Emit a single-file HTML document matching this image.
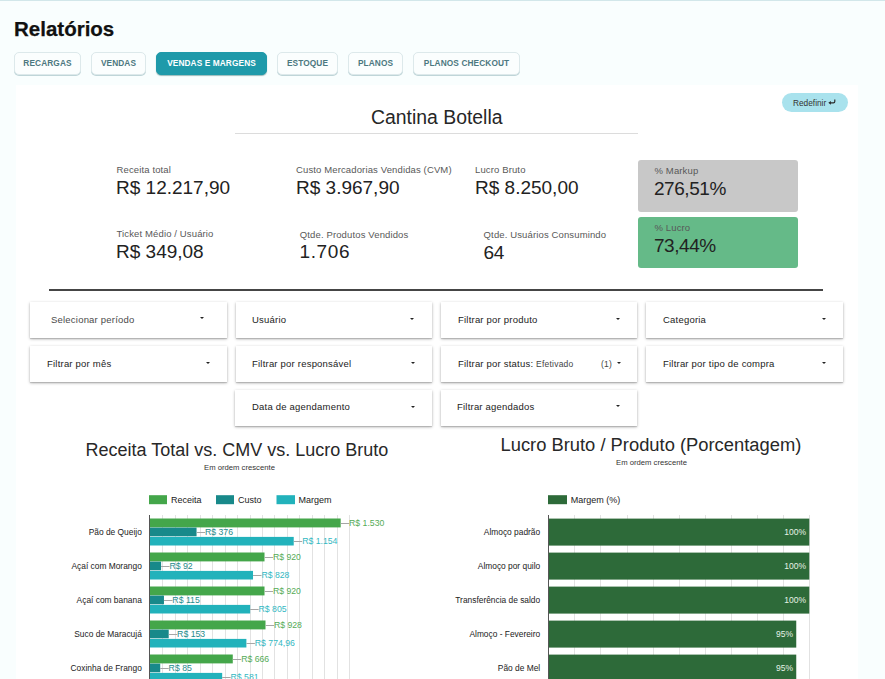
<!DOCTYPE html>
<html><head><meta charset="utf-8">
<style>
*{box-sizing:border-box;margin:0;padding:0}
html,body{width:885px;height:679px;overflow:hidden}
body{background:#f9fefe;font-family:"Liberation Sans",sans-serif;position:relative;color:#222}
.a{position:absolute;white-space:nowrap}
#topline{position:absolute;left:0;top:0;width:885px;height:1px;background:#d2e7ea}
h1{position:absolute;left:14px;top:19px;font-size:20.5px;line-height:20.5px;font-weight:700;color:#111;-webkit-text-stroke:0.25px #111}
.tab{position:absolute;top:52px;height:22.6px;border:1px solid #dde9eb;border-radius:5px;background:#fbfefe;box-shadow:0 1px 0 #bfd5d8;font-size:8.3px;font-weight:700;color:#4c7880;text-align:center;line-height:21px;letter-spacing:0.1px}
.tab.on{background:#1f9aaa;border-color:#1f9aaa;color:#fff;box-shadow:0 1px 1px #9bb}
#card{position:absolute;left:15.7px;top:85px;width:842.1px;height:600px;background:#fff}
.redef{position:absolute;left:782px;top:93px;width:66px;height:19px;border-radius:10px;background:#a9e2ed;font-size:8px;line-height:19px;color:#333;text-align:center}
.title{font-size:19.4px;line-height:20px;color:#262626}
.hr1{position:absolute;left:235px;top:133px;width:403px;height:1px;background:#dcdcdc}
.lbl{font-size:9.5px;line-height:10px;color:#585858;letter-spacing:0.13px}
.val{font-size:19px;line-height:19px;color:#222}
.box{position:absolute;border-radius:3px}
.hr2{position:absolute;left:49px;top:289px;width:774px;height:2px;background:#454545}
.dd{position:absolute;height:35.6px;background:#fff;box-shadow:0 1px 3px rgba(0,0,0,0.28),0 1px 1px rgba(0,0,0,0.14)}
.dd span{position:absolute;font-size:9.5px;line-height:10px;color:#222;white-space:nowrap;letter-spacing:0.21px}
.arr{position:absolute;width:0;height:0;border-left:2.6px solid transparent;border-right:2.6px solid transparent;border-top:2.9px solid #222;margin-top:-0.8px;margin-left:0}
.ctitle{font-size:18px;line-height:18px;color:#282828}
.csub{font-size:7.7px;line-height:8px;color:#333}
.leg{font-size:9.2px;line-height:9px;color:#222}
.yl{font-size:8.6px;line-height:9px;color:#222;text-align:right}
.dl{font-size:9px;line-height:9px}
</style></head>
<body>
<div id="topline"></div>
<h1>Relatórios</h1>
<div class="tab" style="left:14px;width:67px">RECARGAS</div>
<div class="tab" style="left:91px;width:55px">VENDAS</div>
<div class="tab on" style="left:156px;width:111px">VENDAS E MARGENS</div>
<div class="tab" style="left:277px;width:61px">ESTOQUE</div>
<div class="tab" style="left:348px;width:55px">PLANOS</div>
<div class="tab" style="left:413px;width:107px">PLANOS CHECKOUT</div>

<div id="card"></div>
<div class="redef"><span style="position:absolute;left:11px;top:6px;font-size:8.3px;line-height:9px">Redefinir</span><svg style="position:absolute;left:46px;top:5.5px" width="8" height="7" viewBox="0 0 8 7"><path d="M6.8 0.6V2.4Q6.8 3.8 5.4 3.8H1.8" fill="none" stroke="#2a2a2a" stroke-width="1.15"/><path d="M0.3 3.8L2.9 1.9V5.7Z" fill="#2a2a2a"/></svg></div>
<div class="a title" style="left:371px;top:107px">Cantina Botella</div>
<div class="hr1"></div>

<div class="a lbl" style="left:116.5px;top:165px">Receita total</div>
<div class="a val" style="left:116px;top:178px">R$ 12.217,90</div>
<div class="a lbl" style="left:296px;top:165px">Custo Mercadorias Vendidas (CVM)</div>
<div class="a val" style="left:296px;top:178px">R$ 3.967,90</div>
<div class="a lbl" style="left:475px;top:165px">Lucro Bruto</div>
<div class="a val" style="left:475px;top:178px">R$ 8.250,00</div>

<div class="box" style="left:638px;top:160px;width:160px;height:52px;background:#c8c8c8"></div>
<div class="a lbl" style="left:654.5px;top:165.7px">% Markup</div>
<div class="a val" style="left:654px;top:179px;letter-spacing:-0.45px">276,51%</div>
<div class="box" style="left:638px;top:216.5px;width:160px;height:51.5px;background:#65ba88"></div>
<div class="a lbl" style="left:654.5px;top:223.4px">% Lucro</div>
<div class="a val" style="left:654px;top:236px;letter-spacing:-0.45px">73,44%</div>

<div class="a lbl" style="left:116.5px;top:229.3px">Ticket Médio / Usuário</div>
<div class="a val" style="left:116px;top:242px">R$ 349,08</div>
<div class="a lbl" style="left:299.8px;top:229.5px">Qtde. Produtos Vendidos</div>
<div class="a val" style="left:299.5px;top:242px;letter-spacing:0.6px">1.706</div>
<div class="a lbl" style="left:483.6px;top:229.9px">Qtde. Usuários Consumindo</div>
<div class="a val" style="left:483.5px;top:242.5px;letter-spacing:-0.4px">64</div>

<div class="hr2"></div>

<!-- dropdowns -->
<div class="dd" style="left:30px;top:302px;width:197px"><span style="left:21px;top:13.4px;color:#4a4a4a">Selecionar período</span><i class="arr" style="left:169.5px;top:16px"></i></div>
<div class="dd" style="left:236px;top:302px;width:196px"><span style="left:16px;top:13.4px">Usuário</span><i class="arr" style="left:174px;top:16.5px"></i></div>
<div class="dd" style="left:441px;top:302px;width:196px"><span style="left:17px;top:13.4px">Filtrar por produto</span><i class="arr" style="left:175px;top:16.5px"></i></div>
<div class="dd" style="left:646px;top:302px;width:197px"><span style="left:17px;top:13.4px">Categoria</span><i class="arr" style="left:176px;top:16.5px"></i></div>

<div class="dd" style="left:30px;top:346px;width:197px"><span style="left:17px;top:12.5px">Filtrar por mês</span><i class="arr" style="left:176px;top:17px"></i></div>
<div class="dd" style="left:236px;top:346px;width:196px"><span style="left:16px;top:12.5px">Filtrar por responsável</span><i class="arr" style="left:175px;top:17px"></i></div>
<div class="dd" style="left:441px;top:346px;width:196px"><span style="left:17px;top:12.5px">Filtrar por status: <span style="position:static;font-size:8.5px;color:#444">Efetivado</span></span><span style="left:160px;top:12.5px;font-size:8.5px;color:#444">(1)</span><i class="arr" style="left:176px;top:17px"></i></div>
<div class="dd" style="left:646px;top:346px;width:197px"><span style="left:17px;top:12.5px">Filtrar por tipo de compra</span><i class="arr" style="left:176px;top:17px"></i></div>

<div class="dd" style="left:235px;top:390px;width:197px"><span style="left:17px;top:12.2px">Data de agendamento</span><i class="arr" style="left:176.3px;top:16.3px"></i></div>
<div class="dd" style="left:441px;top:390px;width:196px"><span style="left:16px;top:12.2px">Filtrar agendados</span><i class="arr" style="left:175px;top:16px"></i></div>

<!-- left chart -->
<div class="a ctitle" style="left:85.5px;top:441.1px">Receita Total vs. CMV vs. Lucro Bruto</div>
<div class="a csub" style="left:204px;top:463.7px">Em ordem crescente</div>
<!-- right chart -->
<div class="a ctitle" style="left:500.5px;top:435.8px;font-size:18.35px">Lucro Bruto / Produto (Porcentagem)</div>
<div class="a csub" style="left:616px;top:458.6px">Em ordem crescente</div>

<svg class="a" style="left:0;top:480px" width="885" height="199" viewBox="0 480 885 199" font-family="Liberation Sans, sans-serif">
<rect x="162.00" y="515.00" width="1.00" height="164.00" fill="#e2e2e2"/>
<rect x="175.00" y="515.00" width="1.00" height="164.00" fill="#e2e2e2"/>
<rect x="187.00" y="515.00" width="1.00" height="164.00" fill="#e2e2e2"/>
<rect x="200.00" y="515.00" width="1.00" height="164.00" fill="#e2e2e2"/>
<rect x="212.00" y="515.00" width="1.00" height="164.00" fill="#e2e2e2"/>
<rect x="225.00" y="515.00" width="1.00" height="164.00" fill="#e2e2e2"/>
<rect x="237.00" y="515.00" width="1.00" height="164.00" fill="#e2e2e2"/>
<rect x="250.00" y="515.00" width="1.00" height="164.00" fill="#e2e2e2"/>
<rect x="262.00" y="515.00" width="1.00" height="164.00" fill="#e2e2e2"/>
<rect x="274.00" y="515.00" width="1.00" height="164.00" fill="#e2e2e2"/>
<rect x="287.00" y="515.00" width="1.00" height="164.00" fill="#e2e2e2"/>
<rect x="299.00" y="515.00" width="1.00" height="164.00" fill="#e2e2e2"/>
<rect x="312.00" y="515.00" width="1.00" height="164.00" fill="#e2e2e2"/>
<rect x="324.00" y="515.00" width="1.00" height="164.00" fill="#e2e2e2"/>
<rect x="337.00" y="515.00" width="1.00" height="164.00" fill="#e2e2e2"/>
<rect x="349.00" y="515.00" width="1.00" height="164.00" fill="#e2e2e2"/>
<rect x="149.00" y="495.20" width="18.00" height="9.00" fill="#44a64a"/>
<text x="171" y="503" fill="#222" font-size="9" text-anchor="start" >Receita</text>
<rect x="216.00" y="495.20" width="18.00" height="9.00" fill="#18898a"/>
<text x="238" y="503" fill="#222" font-size="9" text-anchor="start" >Custo</text>
<rect x="276.50" y="495.20" width="18.50" height="9.00" fill="#22b2bb"/>
<text x="298.5" y="503" fill="#222" font-size="9" text-anchor="start" >Margem</text>
<rect x="149.60" y="518.50" width="191.10" height="8.90" fill="#44a64a"/>
<rect x="340.70" y="523.00" width="8.50" height="1.00" fill="#a6a6a6"/>
<text x="349.097" y="526.0500000000001" fill="#55ab57" font-size="8.7" text-anchor="start" >R$ 1.530</text>
<rect x="149.60" y="527.60" width="46.96" height="8.70" fill="#18898a"/>
<rect x="196.56" y="532.00" width="8.50" height="1.00" fill="#a6a6a6"/>
<text x="204.9624" y="535.0500000000001" fill="#1f8b8b" font-size="8.7" text-anchor="start" >R$ 376</text>
<rect x="149.60" y="536.90" width="144.13" height="8.60" fill="#22b2bb"/>
<rect x="293.73" y="541.00" width="8.50" height="1.00" fill="#a6a6a6"/>
<text x="302.1346" y="544.3" fill="#33b8c2" font-size="8.7" text-anchor="start" >R$ 1.154</text>
<text x="141.8" y="535.0" fill="#222" font-size="8.4" text-anchor="end" >Pão de Queijo</text>
<rect x="149.60" y="552.50" width="114.91" height="8.90" fill="#44a64a"/>
<rect x="264.51" y="557.00" width="8.50" height="1.00" fill="#a6a6a6"/>
<text x="272.90799999999996" y="560.0500000000001" fill="#55ab57" font-size="8.7" text-anchor="start" >R$ 920</text>
<rect x="149.60" y="561.60" width="11.49" height="8.70" fill="#18898a"/>
<rect x="161.09" y="566.00" width="8.50" height="1.00" fill="#a6a6a6"/>
<text x="169.4908" y="569.0500000000001" fill="#1f8b8b" font-size="8.7" text-anchor="start" >R$ 92</text>
<rect x="149.60" y="570.90" width="103.42" height="8.60" fill="#22b2bb"/>
<rect x="253.02" y="575.00" width="8.50" height="1.00" fill="#a6a6a6"/>
<text x="261.4172" y="578.3" fill="#33b8c2" font-size="8.7" text-anchor="start" >R$ 828</text>
<text x="141.8" y="569.0" fill="#222" font-size="8.4" text-anchor="end" >Açaí com Morango</text>
<rect x="149.60" y="586.50" width="114.91" height="8.90" fill="#44a64a"/>
<rect x="264.51" y="591.00" width="8.50" height="1.00" fill="#a6a6a6"/>
<text x="272.90799999999996" y="594.0500000000001" fill="#55ab57" font-size="8.7" text-anchor="start" >R$ 920</text>
<rect x="149.60" y="595.60" width="14.36" height="8.70" fill="#18898a"/>
<rect x="163.96" y="600.00" width="8.50" height="1.00" fill="#a6a6a6"/>
<text x="172.3635" y="603.0500000000001" fill="#1f8b8b" font-size="8.7" text-anchor="start" >R$ 115</text>
<rect x="149.60" y="604.90" width="100.54" height="8.60" fill="#22b2bb"/>
<rect x="250.14" y="609.00" width="8.50" height="1.00" fill="#a6a6a6"/>
<text x="258.54449999999997" y="612.3" fill="#33b8c2" font-size="8.7" text-anchor="start" >R$ 805</text>
<text x="141.8" y="603.0" fill="#222" font-size="8.4" text-anchor="end" >Açaí com banana</text>
<rect x="149.60" y="620.50" width="115.91" height="8.90" fill="#44a64a"/>
<rect x="265.51" y="625.00" width="8.50" height="1.00" fill="#a6a6a6"/>
<text x="273.9072" y="628.0500000000001" fill="#55ab57" font-size="8.7" text-anchor="start" >R$ 928</text>
<rect x="149.60" y="629.60" width="19.11" height="8.70" fill="#18898a"/>
<rect x="168.71" y="634.00" width="8.50" height="1.00" fill="#a6a6a6"/>
<text x="177.1097" y="637.0500000000001" fill="#1f8b8b" font-size="8.7" text-anchor="start" >R$ 153</text>
<rect x="149.60" y="638.90" width="96.79" height="8.60" fill="#22b2bb"/>
<rect x="246.39" y="643.00" width="8.50" height="1.00" fill="#a6a6a6"/>
<text x="254.792504" y="646.3" fill="#33b8c2" font-size="8.7" text-anchor="start" >R$ 774,96</text>
<text x="141.8" y="637.0" fill="#222" font-size="8.4" text-anchor="end" >Suco de Maracujá</text>
<rect x="149.60" y="654.50" width="83.18" height="8.90" fill="#44a64a"/>
<rect x="232.78" y="659.00" width="8.50" height="1.00" fill="#a6a6a6"/>
<text x="241.18339999999998" y="662.0500000000001" fill="#55ab57" font-size="8.7" text-anchor="start" >R$ 666</text>
<rect x="149.60" y="663.60" width="10.62" height="8.70" fill="#18898a"/>
<rect x="160.22" y="668.00" width="8.50" height="1.00" fill="#a6a6a6"/>
<text x="168.6165" y="671.0500000000001" fill="#1f8b8b" font-size="8.7" text-anchor="start" >R$ 85</text>
<rect x="149.60" y="672.90" width="72.57" height="8.60" fill="#22b2bb"/>
<rect x="222.17" y="677.00" width="8.50" height="1.00" fill="#a6a6a6"/>
<text x="230.5669" y="680.3" fill="#33b8c2" font-size="8.7" text-anchor="start" >R$ 581</text>
<text x="141.8" y="671.0" fill="#222" font-size="8.4" text-anchor="end" >Coxinha de Frango</text>
<rect x="149.00" y="515.00" width="1.00" height="164.00" fill="#555555"/>
<rect x="574.00" y="515.00" width="1.00" height="164.00" fill="#e2e2e2"/>
<rect x="600.00" y="515.00" width="1.00" height="164.00" fill="#e2e2e2"/>
<rect x="627.00" y="515.00" width="1.00" height="164.00" fill="#e2e2e2"/>
<rect x="653.00" y="515.00" width="1.00" height="164.00" fill="#e2e2e2"/>
<rect x="679.00" y="515.00" width="1.00" height="164.00" fill="#e2e2e2"/>
<rect x="705.00" y="515.00" width="1.00" height="164.00" fill="#e2e2e2"/>
<rect x="731.00" y="515.00" width="1.00" height="164.00" fill="#e2e2e2"/>
<rect x="757.00" y="515.00" width="1.00" height="164.00" fill="#e2e2e2"/>
<rect x="783.00" y="515.00" width="1.00" height="164.00" fill="#e2e2e2"/>
<rect x="809.00" y="515.00" width="1.00" height="164.00" fill="#e2e2e2"/>
<rect x="548.00" y="495.20" width="19.00" height="9.00" fill="#2d6a39"/>
<text x="570.7" y="503" fill="#222" font-size="9" text-anchor="start" >Margem (%)</text>
<rect x="548.30" y="518.60" width="261.00" height="27.00" fill="#2d6a39"/>
<text x="806.0" y="535.1" fill="#e6f2e6" font-size="8.5" text-anchor="end" >100%</text>
<text x="540.2" y="535.1" fill="#222" font-size="8.4" text-anchor="end" >Almoço padrão</text>
<rect x="548.30" y="552.60" width="261.00" height="27.00" fill="#2d6a39"/>
<text x="806.0" y="569.1" fill="#e6f2e6" font-size="8.5" text-anchor="end" >100%</text>
<text x="540.2" y="569.1" fill="#222" font-size="8.4" text-anchor="end" >Almoço por quilo</text>
<rect x="548.30" y="586.60" width="261.00" height="27.00" fill="#2d6a39"/>
<text x="806.0" y="603.1" fill="#e6f2e6" font-size="8.5" text-anchor="end" >100%</text>
<text x="540.2" y="603.1" fill="#222" font-size="8.4" text-anchor="end" >Transferência de saldo</text>
<rect x="548.30" y="620.60" width="247.95" height="27.00" fill="#2d6a39"/>
<text x="792.95" y="637.1" fill="#e6f2e6" font-size="8.5" text-anchor="end" >95%</text>
<text x="540.2" y="637.1" fill="#222" font-size="8.4" text-anchor="end" >Almoço - Fevereiro</text>
<rect x="548.30" y="654.60" width="247.95" height="27.00" fill="#2d6a39"/>
<text x="792.95" y="671.1" fill="#e6f2e6" font-size="8.5" text-anchor="end" >95%</text>
<text x="540.2" y="671.1" fill="#222" font-size="8.4" text-anchor="end" >Pão de Mel</text>
<rect x="548.00" y="515.00" width="1.00" height="164.00" fill="#555555"/>
</svg>
</body></html>
